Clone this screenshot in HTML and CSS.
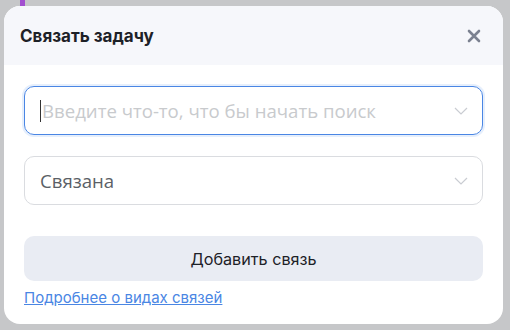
FILE: index.html
```html
<!DOCTYPE html>
<html lang="ru">
<head>
    <meta charset="UTF-8">
    <meta name="viewport" content="width=device-width, initial-scale=1.0">
    <title>Связать задачу</title>
    <link rel="stylesheet" href="styles.css">
</head>
<body>
    <div class="backdrop">
        <div class="app-strip"></div>
        <div class="modal">
            <div class="modal-header">
                <h2>Связать задачу</h2>
                <button class="close" aria-label="Закрыть">
                    <svg width="14" height="14" viewBox="0 0 14 14">
                        <path d="M2 2 L12 12 M12 2 L2 12" stroke="#7b8190" stroke-width="2.6" stroke-linecap="round"/>
                    </svg>
                </button>
            </div>
            <div class="modal-body">
                <div class="select focused">
                    <span class="caret"></span>
                    <span class="placeholder">Введите что-то, что бы начать поиск</span>
                    <svg class="chevron" width="14" height="8" viewBox="0 0 14 8">
                        <path d="M1 1 L7 7 L13 1" fill="none" stroke="#c9ccd2" stroke-width="1.2"/>
                    </svg>
                </div>
                <div class="select">
                    <span class="value">Связана</span>
                    <svg class="chevron" width="14" height="8" viewBox="0 0 14 8">
                        <path d="M1 1 L7 7 L13 1" fill="none" stroke="#c9ccd2" stroke-width="1.2"/>
                    </svg>
                </div>
                <button class="add-btn">Добавить связь</button>
                <a href="#" class="more-link">Подробнее о видах связей</a>
            </div>
        </div>
    </div>
</body>
</html>
```

FILE: styles.css
```css
body {
    margin: 0;
    padding: 0;
    font-family: Inter, "Noto Sans", sans-serif;
}
.backdrop {
    position: relative;
    width: 510px;
    height: 330px;
    background: #c6c7c9;
    padding: 6px 0 0 4px;
    box-sizing: border-box;
    overflow: hidden;
}
.app-strip {
    position: absolute;
    left: 20px;
    top: 0;
    width: 5px;
    height: 6px;
    background: #a24fd0;
}
.modal {
    width: 499px;
    height: 318px;
    background: #fff;
    border-radius: 16px;
    overflow: hidden;
}
.modal-header {
    height: 59px;
    background: #f6f7fb;
    display: flex;
    align-items: center;
    justify-content: space-between;
    padding: 0 22px 0 16px;
}
.modal-header h2 {
    margin: 0;
    font-size: 17px;
    font-weight: 700;
    color: #1d2127;
}
.close {
    border: none;
    background: none;
    padding: 0;
    display: flex;
    cursor: pointer;
}
.modal-body {
    padding: 21px 20px 0 20px;
    display: flex;
    flex-direction: column;
}
.select {
    height: 49px;
    box-sizing: border-box;
    border: 1px solid #dadce0;
    border-radius: 10px;
    display: flex;
    align-items: center;
    padding: 0 14px 0 15px;
    margin-bottom: 21px;
    font-family: "Open Sans", sans-serif;
    font-size: 18.6px;
}
.select.focused {
    border-color: #4a86e4;
    box-shadow: 0 0 0 2px #e6effc;
}
.caret {
    width: 1px;
    height: 22px;
    background: #333;
    margin-right: 1px;
}
.placeholder {
    color: #c8cacd;
    flex: 1;
}
.value {
    color: #5b5f66;
    flex: 1;
}
.chevron {
    flex-shrink: 0;
}
.add-btn {
    height: 45px;
    margin-top: 10px;
    border: none;
    border-radius: 10px;
    background: #e9ecf3;
    font-family: Inter, sans-serif;
    font-size: 16.2px;
    color: #1d2127;
    cursor: pointer;
}
.more-link {
    margin-top: 7px;
    font-size: 15px;
    color: #4a86e4;
    text-decoration: underline;
}
```
